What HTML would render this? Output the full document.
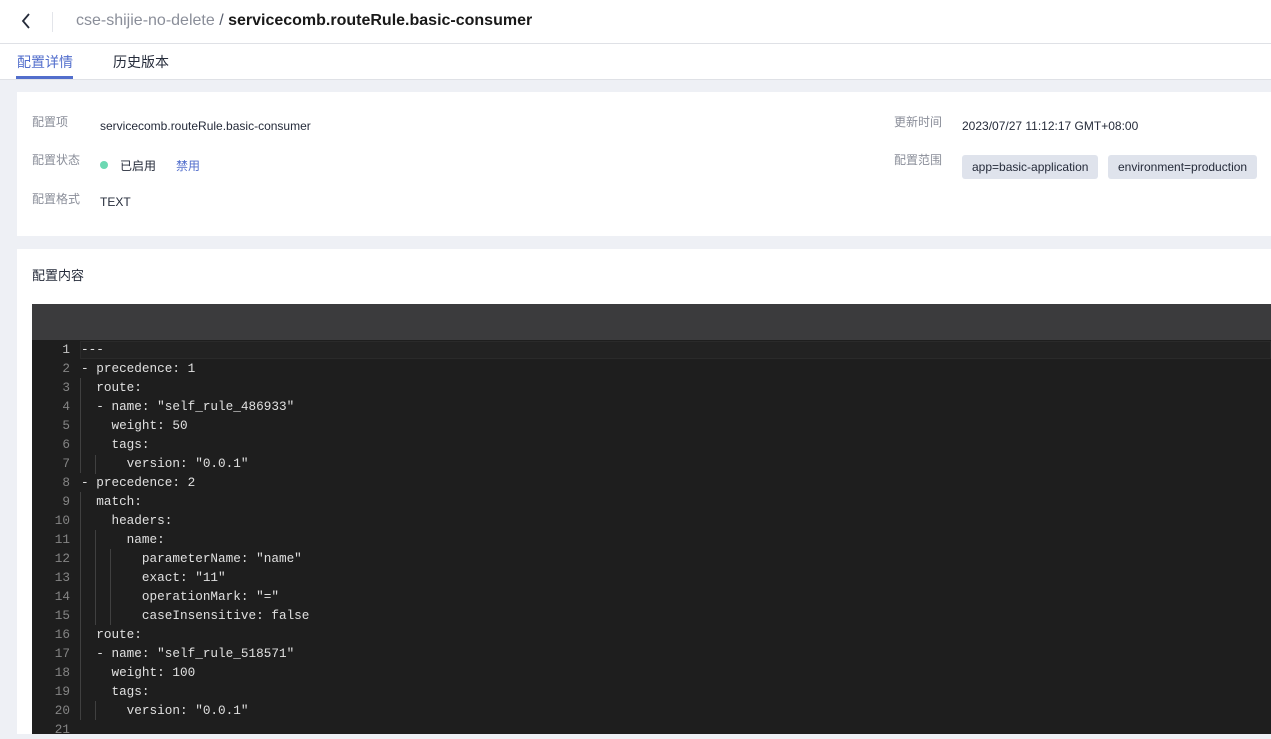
<!DOCTYPE html>
<html><head><meta charset="utf-8"><style>
*{margin:0;padding:0;box-sizing:border-box}
body{width:1271px;height:734px;overflow:hidden;background:#eef0f5;font-family:"Liberation Sans","Noto Sans CJK SC",sans-serif;position:relative}
.hdr{position:absolute;left:0;top:0;width:1271px;height:44px;background:#fff;border-bottom:1px solid #dfe1e6}
.tabs{position:absolute;left:0;top:44px;width:1271px;height:36px;background:#fff;border-bottom:1px solid #dfe1e6}
.abs{position:absolute;white-space:nowrap}
.card{position:absolute;background:#fff;left:17px;width:1254px}
.lbl{color:#8a8e99;font-size:12px}
.val{color:#252b3a;font-size:12px}
.tag{position:absolute;background:#dfe3ec;border-radius:3px;font-size:12px;color:#252b3a;height:24px;line-height:24px;padding:0 10px}
.ed{position:absolute;left:32px;top:304px;width:1239px;height:430px;background:#1e1e1e}
.tb{position:absolute;left:0;top:0;width:1239px;height:36px;background:#3b3b3d}
.code{position:absolute;top:36px;left:0;font-family:"Liberation Mono",monospace;font-size:12.7px;line-height:19px;color:#e0e0e0;white-space:pre}
.ln{position:absolute;top:36px;left:0;width:38px;text-align:right;font-family:"Liberation Mono",monospace;font-size:12.7px;line-height:19px;color:#858585;white-space:pre}
.g{position:absolute;width:1px;background:#404040}
</style></head><body>
<div class="hdr">
<svg class="abs" style="left:20px;top:12px" width="12" height="18" viewBox="0 0 12 18"><path d="M9 2 L3 9 L9 16" stroke="#252b3a" stroke-width="1.8" fill="none"/></svg>
<div class="abs" style="left:52px;top:12px;width:1px;height:20px;background:#e3e5ea"></div>
<div class="abs" style="left:76px;top:12px;font-size:16px;color:#8a8e99">cse-shijie-no-delete <span style="color:#575d6c">/</span> <b style="color:#191919">servicecomb.routeRule.basic-consumer</b></div>
</div>
<div class="tabs">
<div class="abs" style="left:17px;top:8px;font-size:14px;color:#526ecc">配置详情</div>
<div class="abs" style="left:16px;top:32px;width:57px;height:3px;background:#526ecc"></div>
<div class="abs" style="left:113px;top:8px;font-size:14px;color:#252b3a">历史版本</div>
</div>
<div class="card" style="top:92px;height:144px">
<div class="abs lbl" style="left:15px;top:21px">配置项</div>
<div class="abs val" style="left:83px;top:27px">servicecomb.routeRule.basic-consumer</div>
<div class="abs lbl" style="left:15px;top:59px">配置状态</div>
<div class="abs" style="left:83px;top:69px;width:8px;height:8px;border-radius:50%;background:#6cd8b2"></div>
<div class="abs val" style="left:103px;top:65px">已启用</div>
<div class="abs" style="left:159px;top:65px;font-size:12px;color:#526ecc">禁用</div>
<div class="abs lbl" style="left:15px;top:98px">配置格式</div>
<div class="abs val" style="left:83px;top:103px">TEXT</div>
<div class="abs lbl" style="left:877px;top:21px">更新时间</div>
<div class="abs val" style="left:945px;top:27px">2023/07/27 11:12:17 GMT+08:00</div>
<div class="abs lbl" style="left:877px;top:59px">配置范围</div>
<div class="tag" style="left:945px;top:63px">app=basic-application</div>
<div class="tag" style="left:1091px;top:63px">environment=production</div>
</div>
<div class="card" style="top:249px;height:485px">
<div class="abs" style="left:15px;top:16px;font-size:13px;color:#252b3a">配置内容</div>
</div>
<div class="ed">
<div class="tb"></div>
<div class="abs" style="left:48px;top:37px;width:1191px;height:18px;border:1px solid #2a2a2a;background:#222"></div>
<div class="g" style="left:48px;top:74px;height:95px"></div>
<div class="g" style="left:63px;top:151px;height:19px"></div>
<div class="g" style="left:48px;top:188px;height:228px"></div>
<div class="g" style="left:63px;top:226px;height:95px"></div>
<div class="g" style="left:78px;top:245px;height:76px"></div>
<div class="g" style="left:63px;top:397px;height:19px"></div>
<div class="ln"><span style="color:#c6c6c6">1</span>
2
3
4
5
6
7
8
9
10
11
12
13
14
15
16
17
18
19
20
21</div>
<div class="code" style="left:49px">---
- precedence: 1
  route:
  - name: "self_rule_486933"
    weight: 50
    tags:
      version: "0.0.1"
- precedence: 2
  match:
    headers:
      name:
        parameterName: "name"
        exact: "11"
        operationMark: "="
        caseInsensitive: false
  route:
  - name: "self_rule_518571"
    weight: 100
    tags:
      version: "0.0.1"
</div>
</div>
</body></html>
